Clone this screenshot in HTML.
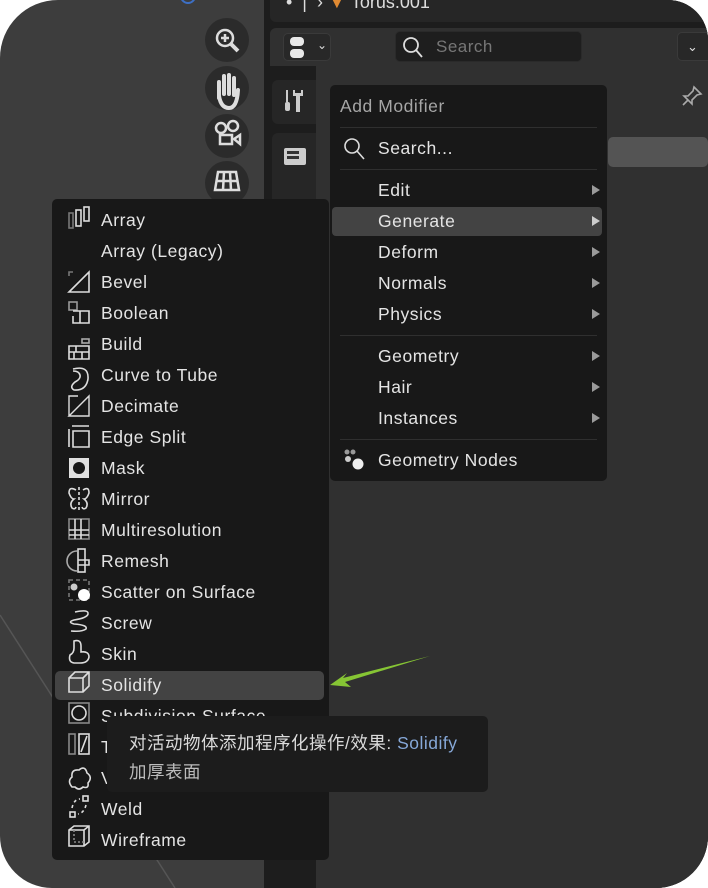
<!DOCTYPE html>
<html><head><meta charset="utf-8"><style>
*{margin:0;padding:0;box-sizing:border-box}
body{width:708px;height:888px;background:#fff;position:relative;overflow:hidden;font-family:"Liberation Sans","Noto Sans CJK SC",sans-serif}
.frame{position:absolute;left:0;top:0;width:708px;height:888px;border-radius:58px 40px 52px 52px;background:#3d3d3d;overflow:hidden}
.abs{position:absolute}
.menu{position:absolute;background:#181818;border-radius:5px}
.it{position:absolute;left:0;height:31px;line-height:31px;font-size:17.5px;letter-spacing:0.55px;color:#e4e4e4;white-space:nowrap}
.lm .it{left:49px}
.rm .it{left:48px}
.arr{position:absolute;right:7px;width:0;height:0;border-left:8px solid #9a9a9a;border-top:5px solid transparent;border-bottom:5px solid transparent}
.sep{position:absolute;left:10px;right:10px;height:1px;background:#2f2f2f}
.circ{position:absolute;left:205px;width:44px;height:44px;border-radius:50%;background:#2b2b2b}
</style></head><body>
<div class="frame">
 <svg class="abs" style="left:0;top:600px" width="200" height="288"><line x1="0" y1="15" x2="175" y2="288" stroke="#555" stroke-width="1.5"/></svg>
 <div class="circ" style="top:18px"></div>
 <div class="circ" style="top:66px"></div>
 <div class="circ" style="top:114px"></div>
 <div class="circ" style="top:161px"></div>
 <svg class="abs" style="left:205px;top:18px" width="44" height="190" fill="none" stroke="#ddd" stroke-width="2.5">
  <circle cx="20" cy="20" r="8"/><line x1="26" y1="26" x2="33" y2="33" stroke-width="4"/><line x1="16" y1="20" x2="24" y2="20"/><line x1="20" y1="16" x2="20" y2="24"/>
  <path d="M14 80 L14 64 M19 76 L19 58 M24 76 L24 57 M29 77 L29 60 M14 78 Q16 90 24 90 Q32 90 33 72" stroke-width="4" stroke-linecap="round"/>
  <circle cx="16" cy="110" r="5"/><circle cx="28" cy="108" r="5"/><rect x="15" y="117" width="12" height="9"/><path d="M29 121 L35 117 L35 126 Z"/>
  <path d="M10 172 L34 172 L31 154 L13 154 Z M11 163 L33 163 M19 154 L18 172 M25 154 L26 172"/>
 </svg>
 <div class="abs" style="left:180px;top:-12px;width:16px;height:16px;border-radius:50%;border:2px solid #3d6fc4"></div>
 <div class="abs" style="left:264px;top:0;width:444px;height:888px;background:#1d1d1d"></div>
 <div class="abs" style="left:270px;top:-10px;width:438px;height:32px;background:#262626;border-radius:6px"></div>
 <div class="abs" style="left:286px;top:-8px;font-size:18px;color:#ddd">•&nbsp;&nbsp;|&nbsp;&nbsp;›&nbsp;<span style="color:#e08a32">▼</span>&nbsp;Torus.001</div>
 <div class="abs" style="left:270px;top:28px;width:438px;height:38px;background:#303030;border-radius:6px 0 0 0"></div>
 <div class="abs" style="left:283px;top:33px;width:48px;height:28px;border-radius:5px;background:#282828;border:1px solid #3a3a3a"></div>
 <div class="abs" style="left:290px;top:37px;width:14px;height:9px;border-radius:4px;background:#e8e8e8"></div>
 <div class="abs" style="left:290px;top:49px;width:14px;height:9px;border-radius:4px;background:#e8e8e8"></div>
 <div class="abs" style="left:317px;top:38px;color:#ddd;font-size:12px">⌄</div>
 <div class="abs" style="left:395px;top:31px;width:187px;height:31px;border-radius:5px;background:#1e1e1e;border:1px solid #2a2a2a"></div>
 <svg class="abs" style="left:400px;top:35px" width="26" height="26" fill="none" stroke="#ddd" stroke-width="1.8"><circle cx="11" cy="10" r="7"/><line x1="16" y1="15" x2="22" y2="22"/></svg>
 <div class="abs" style="left:436px;top:37px;font-size:17px;color:#777;letter-spacing:0.5px">Search</div>
 <div class="abs" style="left:677px;top:32px;width:40px;height:29px;border-radius:5px;background:#282828;border:1px solid #3a3a3a;color:#ddd;font-size:13px;padding-left:9px;line-height:27px">⌄</div>
 <div class="abs" style="left:316px;top:66px;width:392px;height:822px;background:#303030"></div>
 <div class="abs" style="left:272px;top:80px;width:44px;height:44px;background:#262626;border-radius:6px 0 0 6px"></div>
 <div class="abs" style="left:272px;top:133px;width:44px;height:80px;background:#262626;border-radius:6px 0 0 6px"></div>
 <svg class="abs" style="left:280px;top:88px" width="30" height="26" fill="#ccc"><rect x="6" y="2" width="2" height="12"/><rect x="5" y="14" width="5" height="9" rx="2"/><rect x="16" y="8" width="4" height="16"/><path d="M13 2 L13 8 L23 8 L23 2 L21 2 L21 5 L15 5 L15 2Z"/></svg>
 <svg class="abs" style="left:282px;top:143px" width="26" height="24" fill="#ccc"><rect x="2" y="5" width="22" height="17" rx="2"/><rect x="5" y="8" width="12" height="3" fill="#333"/><rect x="5" y="13" width="12" height="3" fill="#333"/></svg>
 <svg class="abs" style="left:680px;top:84px" width="24" height="24" fill="none" stroke="#aaa" stroke-width="1.6"><path d="M14 3 L21 10 L17 11 L12 16 L12 20 L4 12 L8 12 L13 7 Z M8 16 L3 21"/></svg>
 <div class="abs" style="left:608px;top:137px;width:100px;height:30px;background:#545454;border-radius:5px"></div>

 <div class="menu rm" style="left:330px;top:85px;width:277px;height:396px">
  <div class="it" style="top:6px;left:10px;color:#a6a6a6">Add Modifier</div>
  <div class="sep" style="top:42px"></div>
  <svg class="abs" style="left:12px;top:51px" width="26" height="26" fill="none" stroke="#ddd" stroke-width="1.6"><circle cx="10" cy="10" r="7"/><line x1="15" y1="15" x2="22" y2="23"/></svg>
  <div class="it" style="top:48px">Search...</div>
  <div class="sep" style="top:84px"></div>
  <div class="it" style="top:90px">Edit</div><div class="arr" style="top:100px"></div>
  <div class="abs" style="left:2px;top:122px;width:270px;height:29px;background:#434343;border-radius:4px"></div>
  <div class="it" style="top:121px">Generate</div><div class="arr" style="top:131px;border-left-color:#ccc"></div>
  <div class="it" style="top:152px">Deform</div><div class="arr" style="top:162px"></div>
  <div class="it" style="top:183px">Normals</div><div class="arr" style="top:193px"></div>
  <div class="it" style="top:214px">Physics</div><div class="arr" style="top:224px"></div>
  <div class="sep" style="top:250px"></div>
  <div class="it" style="top:256px">Geometry</div><div class="arr" style="top:266px"></div>
  <div class="it" style="top:287px">Hair</div><div class="arr" style="top:297px"></div>
  <div class="it" style="top:318px">Instances</div><div class="arr" style="top:328px"></div>
  <div class="sep" style="top:354px"></div>
  <svg class="abs" style="left:12px;top:362px" width="26" height="26" fill="#ccc"><circle cx="5" cy="5" r="2.5" fill="#999"/><circle cx="11" cy="5" r="2.5" fill="#999"/><circle cx="6" cy="12" r="3"/><circle cx="16" cy="17" r="5.5" fill="#eee"/></svg>
  <div class="it" style="top:360px">Geometry Nodes</div>
 </div>

 <div class="menu lm" style="left:52px;top:199px;width:277px;height:661px">
  <div class="abs" style="left:3px;top:472px;width:269px;height:29px;background:#434343;border-radius:5px"></div>
  <svg class="abs" style="left:0;top:0" width="50" height="661" fill="none" stroke="#ddd" stroke-width="1.6">
   <g stroke="#777"><rect x="17" y="14" width="4" height="15"/></g><rect x="24" y="11" width="5" height="16"/><rect x="32" y="8" width="5" height="14"/>
   <path d="M17 93 L37 73 L37 93 Z" /><path d="M17 77 L17 73 L21 73" stroke="#777"/>
   <rect x="17" y="103" width="8" height="8" stroke="#999"/><path d="M21 124 L28 124 L28 112 L21 112 M28 112 L37 112 L37 124 L21 124 L21 117"/>
   <path d="M17 147 L37 147 L37 160 L17 160 Z M17 153 L37 153 M24 147 L24 153 M30 153 L30 160 M22 153 L22 160"/><rect x="30" y="140" width="7" height="4" stroke="#aaa"/>
   <path d="M21 170 Q37 166 36 180 Q34 192 22 191 Q17 188 23 183 Q29 180 28 176 Q27 172 21 172"/>
   <path d="M17 217 L37 197 L37 217 Z M17 217 L17 197 L26 197" stroke-width="1.4"/>
   <path d="M20 227 L37 227 M17 230 L17 248 M21 232 L37 232 L37 248 L21 248 Z" />
   <rect x="17" y="259" width="20" height="20" fill="#e0e0e0" stroke="none"/><circle cx="27" cy="269" r="6" fill="#181818" stroke="none"/>
   <path d="M27 288 L27 311" stroke-dasharray="3 2"/><path d="M24 291 Q17 287 17 294 Q19 300 22 300 Q17 304 20 309 Q23 311 24 308 M31 291 Q37 287 37 294 Q35 300 32 300 Q37 304 34 309 Q31 311 30 308"/>
   <rect x="17" y="320" width="20" height="20" stroke="#888"/><path d="M23 320 L23 340 M29 320 L29 340 M17 331 L37 331 M17 336 L37 336"/>
   <path d="M25 352 A10 10 0 0 0 25 372" stroke="#aaa"/><rect x="26" y="350" width="7" height="23"/><path d="M26 361 L37 361 L37 366 L26 366"/>
   <rect x="17" y="381" width="20" height="20" stroke="#777" stroke-dasharray="4 3"/><circle cx="22" cy="388" r="3.5" fill="#ccc" stroke="none"/><circle cx="32" cy="396" r="6" fill="#fff" stroke="none"/>
   <path d="M23 413 Q37 410 36 415 Q35 419 22 421 Q15 423 22 425 Q36 426 34 430 Q30 433 19 432"/>
   <path d="M22 442 Q29 440 29 447 L29 453 Q37 452 37 458 Q36 464 28 464 L22 464 Q16 463 18 456 Q22 454 22 449 Z"/>
   <path d="M17 479 L23 473 L37 473 L37 487 L31 493 L17 493 Z M31 479 L37 473 M31 479 L31 493 M17 479 L31 479"/>
   <rect x="17" y="504" width="20" height="20" stroke="#888"/><circle cx="27" cy="514" r="7"/>
   <rect x="17" y="535" width="6" height="20" stroke="#888"/><rect x="27" y="535" width="10" height="20"/><line x1="29" y1="553" x2="35" y2="537"/>
   <path d="M20 588 Q15 582 20 578 Q19 570 27 571 Q33 566 35 574 Q41 578 36 584 Q37 590 31 588 Q27 592 23 588 Z"/>
   <rect x="31" y="597" width="5" height="5"/><rect x="18" y="613" width="5" height="5"/><path d="M20 609 Q22 600 28 600 M34 606 Q32 614 26 615" stroke-dasharray="3 3"/>
   <path d="M17 631 L22 627 L37 627 L37 643 L32 647 L17 647 Z M32 631 L37 627 M32 631 L32 647 M17 631 L32 631"/><path d="M22 631 L22 643 L32 643" stroke="#888" stroke-dasharray="2 2"/>
  </svg>
  <div class="it" style="top:6px">Array</div>
  <div class="it" style="top:37px">Array (Legacy)</div>
  <div class="it" style="top:68px">Bevel</div>
  <div class="it" style="top:99px">Boolean</div>
  <div class="it" style="top:130px">Build</div>
  <div class="it" style="top:161px">Curve to Tube</div>
  <div class="it" style="top:192px">Decimate</div>
  <div class="it" style="top:223px">Edge Split</div>
  <div class="it" style="top:254px">Mask</div>
  <div class="it" style="top:285px">Mirror</div>
  <div class="it" style="top:316px">Multiresolution</div>
  <div class="it" style="top:347px">Remesh</div>
  <div class="it" style="top:378px">Scatter on Surface</div>
  <div class="it" style="top:409px">Screw</div>
  <div class="it" style="top:440px">Skin</div>
  <div class="it" style="top:471px">Solidify</div>
  <div class="it" style="top:502px">Subdivision Surface</div>
  <div class="it" style="top:533px">Triangulate</div>
  <div class="it" style="top:564px">Volume to Mesh</div>
  <div class="it" style="top:595px">Weld</div>
  <div class="it" style="top:626px">Wireframe</div>
 </div>

 <svg class="abs" style="left:325px;top:652px" width="110" height="40"><path d="M105 4 L18 26 L22 21 L5 33 L26 35 L20 30 Z" fill="#86c534"/></svg>

 <div class="abs" style="left:107px;top:716px;width:381px;height:76px;background:#1c1c1c;border-radius:5px">
  <div class="abs" style="left:22px;top:14px;font-size:17.5px;letter-spacing:0.5px;color:#dadada;white-space:nowrap">对活动物体添加程序化操作/效果: <span style="color:#86a8d8">Solidify</span></div>
  <div class="abs" style="left:22px;top:43px;font-size:17.5px;letter-spacing:0.5px;color:#bcbcbc">加厚表面</div>
 </div>
</div>
</body></html>
